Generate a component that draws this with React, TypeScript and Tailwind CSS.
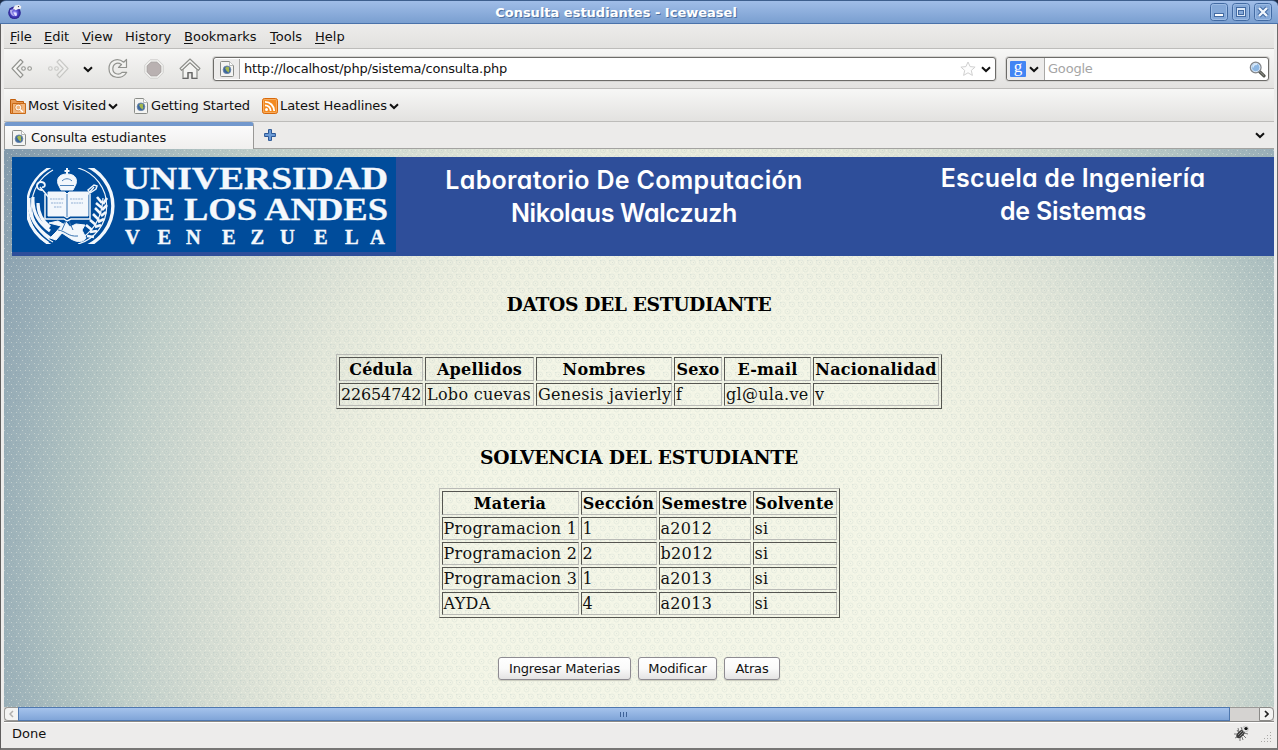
import React from "react";

const Chevron = ({ className = "" }: { className?: string }) => (
  <svg width="10" height="7" viewBox="0 0 10 7" className={"shrink-0 " + className}>
    <path d="M1 1.2 L5 5 L9 1.2" fill="none" stroke="#111" strokeWidth="2" />
  </svg>
);

const PageIcon = () => (
  <svg width="14" height="16" viewBox="0 0 14 16" className="shrink-0">
    <path d="M1.5 .5h8l4 4v10a1 1 0 0 1-1 1h-11a1 1 0 0 1-1-1v-13a1 1 0 0 1 1-1z" fill="#f4f4f2" stroke="#8a8c88" />
    <path d="M9.5 .5v4h4" fill="#fff" stroke="#a5a7a3" strokeWidth=".8" />
    <circle cx="7" cy="8.8" r="3.9" fill="#3c679e" stroke="#6d87aa" strokeWidth=".8" />
    <path d="M5 7l2-1.6 2.4 1-.5 2 .6 1-1 2-1.200-1-1-1z" fill="#a5b84e" />
  </svg>
);

const TitleIcon = () => (
  <svg width="14" height="16" viewBox="0 0 14 16">
    <defs>
      <radialGradient id="orb">
        <stop offset="0" stopColor="#a7a3ff" />
        <stop offset=".6" stopColor="#4a42c4" />
        <stop offset="1" stopColor="#26208b" />
      </radialGradient>
    </defs>
    <circle cx="6.500" cy="8.800" r="6.300" fill="url(#orb)" />
    <path d="M2 6c0 4 2 6 5 6-2-1-3-3-3-5l2.500-2z" fill="#c9c6f5" opacity=".8" />
    <path d="M5.500 8.500l3 0 .5 3-2 .5z" fill="#e6e4ff" />
    <path d="M5 4.500L7 1.500l4-.8 2.300 1.800-.5 2.300-3 .5-2 1z" fill="#f1f1f4" />
    <circle cx="10.500" cy="2.600" r=".7" fill="#333" />
  </svg>
);

const BackArrow = ({ flip = false }: { flip?: boolean }) => (
  <svg width="22" height="22" viewBox="0 0 22 22" className={flip ? "-scale-x-100 opacity-40" : ""}>
    <path d="M9.5 1.5L12 4 5.8 10.5 12 17l-2.5 2.6L1 10.5z" fill="#f5f5f3" stroke="#92938f" strokeWidth="1.1" strokeLinejoin="round" />
    <circle cx="12.5" cy="10.5" r="1.8" fill="#f5f5f3" stroke="#92938f" strokeWidth="1.1" />
    <circle cx="18.6" cy="10.5" r="1.8" fill="#f5f5f3" stroke="#92938f" strokeWidth="1.1" />
  </svg>
);

const Reload = () => (
  <svg width="20" height="22" viewBox="0 0 20 22">
    <path d="M18.500 1.500v8h-8l3-3C9 3.500 4.800 6 4.800 10.800c0 5 6 7 9.200 3.500h4.700C15 22 1 21 1 10.700 1 1.500 10 -.5 15.700 4.200z" fill="#f2f2f0" stroke="#92938f" strokeWidth="1.200" strokeLinejoin="round" />
  </svg>
);

const Stop = () => (
  <svg width="20" height="20" viewBox="0 0 20 20">
    <path d="M6.200 .7h7.600l5.500 5.500v7.600l-5.500 5.500H6.200L.7 13.800V6.200z" fill="#eeeeec" stroke="#d3d2d0" />
    <path d="M7 3.200h6L16.800 7v6L13 16.800H7L3.200 13V7z" fill="#b9b1b1" stroke="#a9a2a2" />
  </svg>
);

const Home = () => (
  <svg width="22" height="22" viewBox="0 0 22 22">
    <path d="M4 11v9h5v-5h4v5h5v-9L11 4.500z" fill="#f3f3f1" stroke="#8e8f8b" strokeWidth="1.200" />
    <path d="M11 1L1 10.500l1.600 1.800L11 4.700l8.400 7.600 1.600-1.800z" fill="#f5f5f3" stroke="#8e8f8b" strokeWidth="1.100" strokeLinejoin="round" />
    <path d="M3.500 20.500h5.500v-6h4v6h5.500" fill="none" stroke="#666" strokeWidth="1.200" />
  </svg>
);

const Star = () => (
  <svg width="16" height="16" viewBox="0 0 16 16">
    <path d="M8 1l2.100 4.600 5 .5-3.800 3.300 1.100 5L8 11.800l-4.400 2.600 1.100-5L.9 6.100l5-.5z" fill="#fdfdfd" stroke="#d0d0d0" strokeLinejoin="round" />
  </svg>
);

const Magnifier = () => (
  <svg width="17" height="17" viewBox="0 0 17 17">
    <path d="M10.500 10.500l4.500 4.300" stroke="#555750" strokeWidth="3.200" strokeLinecap="round" />
    <path d="M11.500 11.300l3.200 3" stroke="#9a9c96" strokeWidth="1" strokeLinecap="round" />
    <circle cx="6.700" cy="6.500" r="5.300" fill="#8db7e3" stroke="#85878a" strokeWidth="1.400" />
    <circle cx="6.700" cy="6.500" r="4.200" fill="none" stroke="#e2edf8" strokeWidth=".9" />
    <path d="M4 6.500a3 3 0 0 1 4-3" stroke="#d8e9fa" strokeWidth="1.500" fill="none" />
  </svg>
);

const FolderSearch = () => (
  <svg width="16" height="16" viewBox="0 0 16 16" className="shrink-0">
    <path d="M.5 15.500V1.500h5l1 2h7v12z" fill="#e89a54" stroke="#c25f0c" />
    <path d="M2.500 5.500h13v10h-13z" fill="#f2b67d" stroke="#c96a17" />
    <circle cx="8.300" cy="9.500" r="2.500" fill="#f0b47c" stroke="#fff" strokeWidth="1.200" />
    <circle cx="8.300" cy="9.500" r="3.400" fill="none" stroke="#cf7426" strokeWidth=".6" />
    <path d="M10.300 11.500l2.600 2.500" stroke="#fff" strokeWidth="1.500" />
  </svg>
);

const Rss = () => (
  <svg width="16" height="16" viewBox="0 0 16 16" className="shrink-0">
    <rect x=".5" y=".5" width="15" height="15" rx="2" fill="#f38b22" stroke="#d8690b" />
    <rect x="1.500" y="1.500" width="13" height="13" rx="1" fill="none" stroke="#f9b56d" strokeWidth=".8" />
    <circle cx="4.500" cy="11.500" r="1.500" fill="#fff" />
    <path d="M3 7.300a5.700 5.700 0 0 1 5.700 5.700M3 3.800a9.200 9.200 0 0 1 9.200 9.200" fill="none" stroke="#fff" strokeWidth="1.800" />
  </svg>
);

const Plus = () => (
  <svg width="12" height="12" viewBox="0 0 12 12">
    <path d="M4.500.600h3v3.900h3.900v3H7.500v3.900h-3V7.500H.6v-3h3.900z" fill="#6a9ad6" stroke="#2c5795" />
  </svg>
);

const Bug = () => (
  <svg width="17" height="17" viewBox="0 0 17 17">
    <path d="M1 9l4 0M2 13l3-1.500M7 16l0-4M5 3l1 4M8 2l1 3M15 9l-4-1M13 13l-3-3M4 5l2 3M10 15l-1-3" stroke="#777" strokeWidth="1" />
    <ellipse cx="7.500" cy="9" rx="5" ry="2.900" transform="rotate(-45 7.500 9)" fill="#3c3c3c" />
    <path d="M5 10l4-4M6.500 11.500l4-4" stroke="#aaa" strokeWidth=".7" />
    <circle cx="12.500" cy="4" r="2.900" fill="#eee" stroke="#aaa" strokeWidth=".6" />
    <circle cx="13" cy="3.600" r="1.700" fill="#111" />
  </svg>
);

const WindowButton = ({ kind }: { kind: "min" | "max" | "close" }) => (
  <svg width="18" height="18" viewBox="0 0 18 18">
    <rect x=".5" y=".5" width="17" height="17" rx="3" fill="#84a8d8" stroke="#426aa2" />
    <rect x="1.500" y="1.500" width="15" height="15" rx="2" fill="none" stroke="#9dbce5" />
    {kind === "min" && <rect x="4.500" y="10.500" width="9" height="3" fill="#fff" stroke="#426aa2" />}
    {kind === "max" && (
      <>
        <rect x="4.500" y="4.500" width="9" height="9" fill="#dce8f7" stroke="#426aa2" />
        <rect x="6.500" y="7.500" width="5" height="4" fill="#84a8d8" stroke="#426aa2" />
      </>
    )}
    {kind === "close" && (
      <>
        <path d="M5 5l8 8M13 5l-8 8" stroke="#426aa2" strokeWidth="4.400" />
        <path d="M5 5l8 8M13 5l-8 8" stroke="#f2f7fd" strokeWidth="2.400" />
      </>
    )}
  </svg>
);

const Backdrop = () => (
  <svg width="1270" height="558" viewBox="4 149 1270 558" className="absolute inset-0">
    <defs>
      <radialGradient id="glow" gradientUnits="userSpaceOnUse" cx="0" cy="0" r="1" gradientTransform="translate(700 600) rotate(-6) scale(800 900)">
        <stop offset="0" stopColor="#f4f6e7" />
        <stop offset=".3" stopColor="#f3f5e6" />
        <stop offset=".45" stopColor="#edefe0" />
        <stop offset=".54" stopColor="#e3e7da" />
        <stop offset=".64" stopColor="#d3dbd2" />
        <stop offset=".73" stopColor="#c1cfca" />
        <stop offset=".8" stopColor="#afc1c1" />
        <stop offset=".88" stopColor="#9aafb8" />
        <stop offset="1" stopColor="#8097aa" />
      </radialGradient>
      <pattern id="rings" width="9" height="14" patternUnits="userSpaceOnUse">
        <g fill="none" strokeWidth="1">
          <circle cx="4.500" cy="3.500" r="2.500" stroke="#5d8290" strokeOpacity=".08" />
          <circle cx="0" cy="10.500" r="2.500" stroke="#5d8290" strokeOpacity=".08" />
          <circle cx="9" cy="10.500" r="2.500" stroke="#5d8290" strokeOpacity=".08" />
        </g>
        <path d="M0 3h1v1H0zM4 10h1v1H4zM2 6h1v1H2zM7 6h1v1H7zM2 0h1v1H2zM7 13h1v1H7z" fill="#fffff0" fillOpacity=".35" />
        <path d="M4 3h1v1H4zM0 10h1v1H0zM6 8h1v1H6z" fill="#5d8290" fillOpacity=".14" />
      </pattern>
    </defs>
    <rect x="4" y="149" width="1270" height="558" fill="url(#glow)" />
    <rect x="4" y="149" width="1270" height="558" fill="url(#rings)" />
  </svg>
);

const UniversityLogo = () => (
  <svg width="384" height="95" viewBox="12 157 384 95" className="shrink-0">
    <rect x="12" y="157" width="384" height="95" fill="#004c9b" />
    <defs>
      <clipPath id="seal">
        <rect x="27" y="168" width="90" height="76" />
      </clipPath>
    </defs>
    <g clipPath="url(#seal)" fill="none" stroke="#f2f7fc">
      <path d="M58 164A44 44 0 0 0 58 248" strokeWidth="2.400" />
      <path d="M53 170A41 41 0 0 0 53 242" strokeWidth="1.200" />
      <path d="M82 164A44 44 0 0 1 82 248" strokeWidth="3.400" />
      <path d="M78 168A39.500 39.500 0 0 1 78 244" strokeWidth="1.200" />
      <path d="M29 198c-1 16 6 30 21 40M33 197c-1 14 6 26 17 34M38 203c0 9 4 18 12 24M27 212c2 14 10 24 21 31" strokeWidth="3.200" />
      <path d="M82 238c12-8 20-22 21-40" strokeWidth="1.200" />
      <path d="M102 203l-5-6M102 208l-6-5M101 214l-6-6M99 220l-6-6M96 225l-6-5M92 230l-6-5M103 204l4-6M102 210l5-5M101 216l5-4M98 222l6-3M95 227l6-2M90 232l7-1M87 236l7 1" strokeWidth="2.600" />
      <path d="M51 200L40 187M83 200l11-13" strokeWidth="1.500" />
      <path d="M42 190c-6 0-7-8-1-8 5 0 5 6 1 5" strokeWidth="1.800" />
      <path d="M88 190l6-5 3 1-1 3-6 4z" strokeWidth="1.500" />
      <path d="M58 184c-2-7 3-10 9-10s11 3 9 10l-3 6H61z" fill="#f2f7fc" strokeWidth="1" />
      <path d="M67 168v6M64.500 171h5" strokeWidth="2" />
      <path d="M60 185.500h14M62 181c3-3 7-3 10 0" stroke="#4d82b9" strokeWidth="1" />
      <path d="M48 192h17l2 2 2-2h19v24H70l-3 2-3-2H48z" fill="#f2f7fc" strokeWidth="1" />
      <path d="M45 194v25h19l3 2 4-2h19v-25" strokeWidth="1.500" />
      <path d="M67 194v23" stroke="#3773b1" strokeWidth="1" />
      <path d="M50 199h14M51 203h12M54 207h8M70 199h13M71 203h12" stroke="#8fb0d3" strokeWidth="1.200" strokeDasharray="2 .7" />
      <path d="M49 223l9-2 5 3-7 8-6 6 6 2 6-7 9 6c7 4 13 3 15-1l-4-8 3-5-9-1-6 3-4-5-5 4z" fill="#f2f7fc" strokeWidth="1" />
      <path d="M58 230c8 1 10 7 20 6M66 221l-4 9M69 221l4 9" stroke="#3773b1" strokeWidth="1" />
    </g>
    <g fill="#f4f8fc" stroke="#f4f8fc" fontFamily="'Liberation Serif', serif">
      <text x="123" y="189" fontSize="32.500" strokeWidth=".3" textLength="265" lengthAdjust="spacingAndGlyphs">UNIVERSIDAD</text>
      <text x="124" y="220" fontSize="32" strokeWidth=".3" textLength="264" lengthAdjust="spacingAndGlyphs">DE LOS ANDES</text>
      <text x="125 157.500 186 222 250.500 280 314 345 370" y="243.500" fontSize="20.500" strokeWidth=".4">VENEZUELA</text>
    </g>
  </svg>
);

const cell = "border border-t-[#555550] border-l-[#555550] border-r-[#b9bab6] border-b-[#b9bab6] p-px align-middle";

function DataTable({ widths, total, head, rows }: { widths: number[]; total: number; head: string[]; rows: string[][] }) {
  return (
    <table
      className="table-fixed border-separate border-spacing-[2px] border border-t-[#b9bab6] border-l-[#b9bab6] border-r-[#555550] border-b-[#555550] text-[16px] leading-[19px] whitespace-nowrap text-[#111]"
      style={{ width: total }}
    >
      <colgroup>
        {widths.map((w, i) => (
          <col key={i} style={{ width: w }} />
        ))}
      </colgroup>
      <thead>
        <tr className="h-6">
          {head.map((h) => (
            <th key={h} className={cell + " text-center font-bold tracking-[0.25px] text-black"}>{h}</th>
          ))}
        </tr>
      </thead>
      <tbody>
        {rows.map((r, i) => (
          <tr key={i} className="h-[23px]">
            {r.map((c, j) => (
              <td key={j} className={cell + (/^\d+$/.test(c) ? " tracking-[-0.15px]" : " tracking-[0.3px]")}>{c}</td>
            ))}
          </tr>
        ))}
      </tbody>
    </table>
  );
}

const menus = [
  { key: "F", rest: "ile", pre: "", w: "w-[34px]" },
  { key: "E", rest: "dit", pre: "", w: "w-[38px]" },
  { key: "V", rest: "iew", pre: "", w: "w-[43px]" },
  { key: "s", rest: "tory", pre: "Hi", w: "w-[59px]" },
  { key: "B", rest: "ookmarks", pre: "", w: "w-[86px]" },
  { key: "T", rest: "ools", pre: "", w: "w-[45px]" },
  { key: "H", rest: "elp", pre: "", w: "w-[40px]" },
];

const formButton = "h-[23px] rounded-[3px] border border-[#8e8b91] bg-linear-to-b from-white via-[#fafafa] to-[#e4e3e3] text-center font-['DejaVu_Sans',sans-serif] text-[13px] leading-[21px] tracking-[-0.15px] text-[#111] shadow-[0_1px_1px_#c9cbbe]";

export default function App() {
  return (
    <div className="flex h-[750px] w-[1278px] flex-col overflow-hidden bg-[#1d2b45] font-['DejaVu_Sans',sans-serif] text-[13px] text-[#111]">
      <header className="flex h-6 shrink-0 items-center rounded-t-md border-t border-b border-t-[#3e5f8e] border-b-[#4a72aa] bg-linear-to-b from-[#a0bde8] to-[#7a9fd0] pr-[6px] pl-2">
        <TitleIcon />
        <h1 className="flex-1 pt-px text-center text-[13px] font-bold text-white [text-shadow:1px_1px_0_#4d70a0]">Consulta estudiantes - Iceweasel</h1>
        <div className="flex gap-1">
          <WindowButton kind="min" />
          <WindowButton kind="max" />
          <WindowButton kind="close" />
        </div>
      </header>

      <div className="flex min-h-0 flex-1 flex-col border-r border-b-2 border-l border-r-[#6d6b6b] border-b-[#777675] border-l-[#5f5d5d] bg-[#edeceb] pr-[3px] pl-[3px]">
        <nav className="flex h-[25px] shrink-0 items-center border-b border-[#bdbcba] bg-linear-to-b from-[#edeceb] to-[#e2e1df] pt-[2px] pl-[6px]">
          {menus.map((m) => (
            <span key={m.key} className={m.w}>
              {m.pre}
              <span className="underline underline-offset-2">{m.key}</span>
              {m.rest}
            </span>
          ))}
        </nav>

        <div className="flex h-10 shrink-0 items-center border-b border-[#bdbcba] bg-linear-to-b from-[#f7f7f6] to-[#e3e2e0] pt-px pl-[7px]">
          <BackArrow />
          <div className="ml-[14px]"><BackArrow flip /></div>
          <Chevron className="ml-[14px]" />
          <div className="ml-[15px]"><Reload /></div>
          <div className="ml-4"><Stop /></div>
          <div className="ml-[15px]"><Home /></div>
          <div className="ml-3 flex h-6 w-[783px] items-center rounded-[3px] border border-[#6d6c69] bg-white shadow-[0_0_0_1px_#d5d4d2]">
            <div className="flex h-5 w-[26px] items-center justify-center rounded-l-[3px] border-r border-[#a9a8a6] bg-[#edeceb]"><PageIcon /></div>
            <span className="flex-1 pl-1 tracking-[-0.19px]">http://localhost/php/sistema/consulta.php</span>
            <Star />
            <Chevron className="mr-1 ml-[5px]" />
          </div>
          <div className="ml-[10px] flex h-6 w-[263px] items-center rounded-[3px] border border-[#6d6c69] bg-white shadow-[0_0_0_1px_#d5d4d2]">
            <div className="flex h-[22px] w-[38px] items-center rounded-l-[3px] border-r border-[#a9a8a6] bg-[#edeceb] pl-[3px]">
              <span className="flex h-4 w-4 items-center justify-center rounded-[1px] bg-[#4285f4] pb-[5px] font-['Liberation_Serif',serif] text-[17px] leading-4 text-white">g</span>
              <Chevron className="ml-[3px]" />
            </div>
            <span className="flex-1 pl-[3px] tracking-[-0.2px] text-[#a5a5a5]">Google</span>
            <div className="mr-[2px]"><Magnifier /></div>
          </div>
        </div>

        <div className="flex h-[33px] shrink-0 items-center border-b border-[#bdbcba] bg-linear-to-b from-[#f7f7f6] to-[#e3e2e0] pt-[2px] pl-[6px]">
          <FolderSearch />
          <span className="ml-[2px] w-[79px] tracking-[-0.08px] whitespace-nowrap">Most Visited</span>
          <Chevron className="ml-px" />
          <div className="ml-4"><PageIcon /></div>
          <span className="ml-[3px] w-[111px] tracking-[-0.1px] whitespace-nowrap">Getting Started</span>
          <Rss />
          <span className="ml-[2px] w-[108px] tracking-[-0.1px] whitespace-nowrap">Latest Headlines</span>
          <Chevron className="ml-px" />
        </div>

        <div className="flex h-[27px] shrink-0 items-stretch bg-[#ecebea]">
          <div className="flex w-[250px] items-center rounded-t-[3px] border-t-4 border-r border-l border-t-[#7298cd] border-r-[#999896] border-l-[#999896] bg-linear-to-b from-[#fbfbfb] to-[#f0efee] pl-[7px]">
            <PageIcon />
            <span className="ml-[5px] tracking-[-0.1px]">Consulta estudiantes</span>
          </div>
          <div className="flex flex-1 items-center border-b border-[#a3a2a0] pl-[10px]">
            <Plus />
            <Chevron className="mr-[9px] ml-auto" />
          </div>
        </div>

        <main className="relative h-[558px] shrink-0 overflow-hidden font-['DejaVu_Serif',serif]">
          <Backdrop />
          <div className="relative flex h-full flex-col items-center pt-2">
            <div className="flex h-[99px] w-full shrink-0 pl-2">
              <div className="flex w-full bg-[#2e4e9a] font-['Inter',sans-serif] text-[25px] leading-[33px] font-semibold whitespace-nowrap text-white [font-feature-settings:'cv11']">
                <UniversityLogo />
                <div className="flex w-[456px] flex-col items-center pt-[7px]">
                  <span className="tracking-[0.3px]">Laboratorio De Computación</span>
                  <span className="tracking-[-0.3px]">Nikolaus Walczuzh</span>
                </div>
                <div className="flex flex-1 flex-col items-center pt-[5px] pl-[20px]">
                  <span className="tracking-[0.2px]">Escuela de Ingeniería</span>
                  <span className="tracking-[-0.2px]">de Sistemas</span>
                </div>
              </div>
            </div>
            <h2 className="mt-[37px] text-[18.720px] leading-[22px] font-bold tracking-[-0.4px] text-black">DATOS DEL ESTUDIANTE</h2>
            <div className="mt-[39px]">
              <DataTable
                total={606}
                widths={[84, 109, 136, 48, 87, 126]}
                head={["Cédula", "Apellidos", "Nombres", "Sexo", "E-mail", "Nacionalidad"]}
                rows={[["22654742", "Lobo cuevas", "Genesis javierly", "f", "gl@ula.ve", "v"]]}
              />
            </div>
            <h2 className="mt-[37px] text-[18.720px] leading-[22px] font-bold tracking-[-0.25px] text-black">SOLVENCIA DEL ESTUDIANTE</h2>
            <div className="mt-5">
              <DataTable
                total={401}
                widths={[137, 76, 92, 84]}
                head={["Materia", "Sección", "Semestre", "Solvente"]}
                rows={[
                  ["Programacion 1", "1", "a2012", "si"],
                  ["Programacion 2", "2", "b2012", "si"],
                  ["Programacion 3", "1", "a2013", "si"],
                  ["AYDA", "4", "a2013", "si"],
                ]}
              />
            </div>
            <div className="mt-[39px] flex gap-[7px]">
              <button className={formButton + " w-[133px]"}>Ingresar Materias</button>
              <button className={formButton + " w-[79px]"}>Modificar</button>
              <button className={formButton + " w-[56px]"}>Atras</button>
            </div>
          </div>
        </main>

        <div className="flex h-[15px] shrink-0 border-b border-[#8a8987] bg-[#d5d3d1]">
          <div className="flex w-[14px] items-center justify-center rounded-l border border-r-0 border-[#9a9997] bg-[#f3f3f2]">
            <svg width="5" height="8" viewBox="0 0 5 8"><path d="M4 1L1 4l3 3" fill="none" stroke="#b0afad" strokeWidth="1.500" /></svg>
          </div>
          <div className="flex w-[1212px] items-center justify-center gap-[2px] border border-[#4e77ae] bg-linear-to-b from-[#a5c3ec] to-[#80a5d8] pr-[2px]">
            <i className="h-[5px] w-px bg-[#3e6297]" />
            <i className="h-[5px] w-px bg-[#3e6297]" />
            <i className="h-[5px] w-px bg-[#3e6297]" />
          </div>
          <div className="flex-1 border-t border-[#9a9997]" />
          <div className="flex w-[15px] items-center justify-center rounded-r border border-[#8a8987] bg-[#f3f3f2]">
            <svg width="5" height="8" viewBox="0 0 5 8"><path d="M1 1l3 3-3 3" fill="none" stroke="#222" strokeWidth="1.700" /></svg>
          </div>
        </div>

        <footer className="flex flex-1 items-center border-t border-white bg-[#edeceb] pl-2">
          <span className="pb-1">Done</span>
          <div className="mr-[10px] ml-auto pb-1"><Bug /></div>
          <svg width="13" height="13" viewBox="0 0 13 13" className="mt-1 mr-[1px]">
            <path d="M10 1h1v1h-1zM7 4h1v1H7zM10 4h1v1h-1zM4 7h1v1H4zM7 7h1v1H7zM10 7h1v1h-1zM1 10h1v1H1zM4 10h1v1H4zM7 10h1v1H7zM10 10h1v1h-1z" fill="#a9a8a6" />
          </svg>
        </footer>
      </div>
    </div>
  );
}
